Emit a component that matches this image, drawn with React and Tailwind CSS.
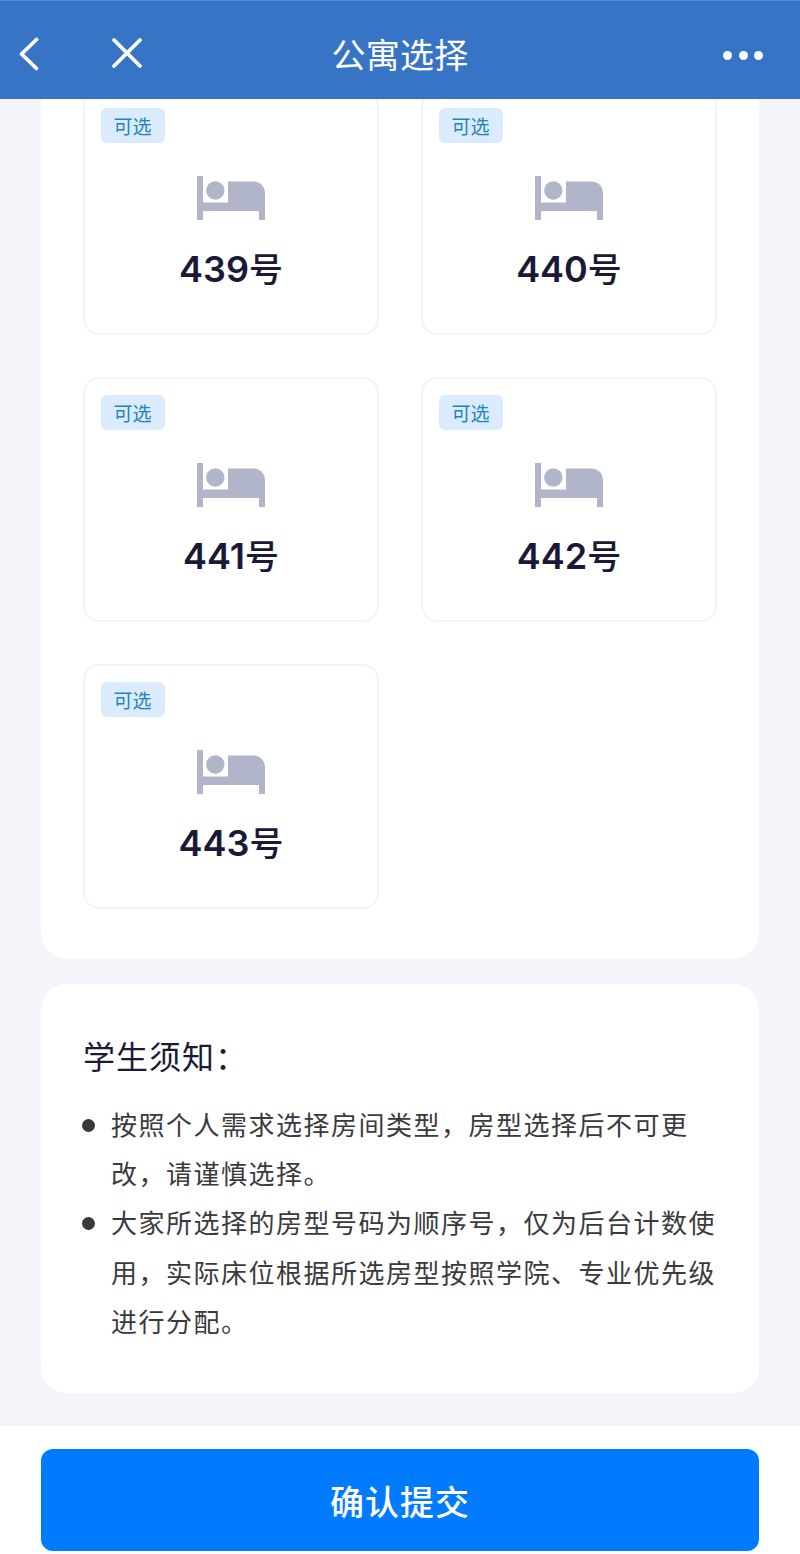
import React from 'react';

const rooms = ['439', '440', '441', '442', '443'];

const notices = [
  ['按照个人需求选择房间类型，房型选择后不可更', '改，请谨慎选择。'],
  ['大家所选择的房型号码为顺序号，仅为后台计数使', '用，实际床位根据所选房型按照学院、专业优先级', '进行分配。'],
];

const BedIcon = () => (
  <svg width="68" height="44" viewBox="0 0 68 44" fill="#b0b5c9">
    <path d="M0 0H6V26.5H31V5.5H56.5C63 5.5 68 10.5 68 17V44H62V35H6V44H0Z" />
    <circle cx="18.3" cy="14.5" r="9.2" />
  </svg>
);

const Header = () => (
  <header className="grid h-[99px] grid-cols-[1fr_auto_1fr] items-center border-t border-[#5288d8] bg-[#3874c5] pb-px text-white">
    <div className="flex items-center">
      <button aria-label="返回" className="ml-[18px] mt-[9px]">
        <svg width="22" height="36" viewBox="0 0 22 36" fill="none" stroke="currentColor" strokeWidth="3.8" strokeLinecap="round" strokeLinejoin="round">
          <path d="M18.5 3.5L3.5 18L18.5 32.5" />
        </svg>
      </button>
      <button aria-label="关闭" className="ml-[71px] mt-[7px]">
        <svg width="32" height="32" viewBox="0 0 32 32" fill="none" stroke="currentColor" strokeWidth="3.8" strokeLinecap="round">
          <path d="M3 3L29 29M29 3L3 29" />
        </svg>
      </button>
    </div>
    <h1 className="mt-[13px] text-[34px] leading-none tracking-[0.3px]">公寓选择</h1>
    <button aria-label="更多" className="mr-[37px] mt-[11px] flex gap-[6.5px] justify-self-end">
      <span className="size-[9px] rounded-full bg-white" />
      <span className="size-[9px] rounded-full bg-white" />
      <span className="size-[9px] rounded-full bg-white" />
    </button>
  </header>
);

const RoomCard = ({ number }) => (
  <div className="relative flex h-[245px] flex-col items-center rounded-[16px] border-2 border-[#f4f4f6] pt-[84px]">
    <span className="absolute left-4 top-4 flex h-[35px] w-16 items-center justify-center rounded-[6px] bg-[#d9ebfc] pr-px pt-1 text-[19px] leading-none text-[#2484b8]">
      可选
    </span>
    <BedIcon />
    <p className="mt-[29px] flex items-baseline text-[36px] font-semibold leading-[40px] text-[#1a1a36]">
      {number}
      <span className="text-[34px] font-medium">号</span>
    </p>
  </div>
);

export default function App() {
  return (
    <div
      lang="zh-CN"
      className="flex h-[1554px] w-[800px] flex-col overflow-hidden bg-[#f4f5fa] font-['Inter','Noto_Sans_CJK_SC',sans-serif]"
    >
      <Header />

      <main className="flex h-[1327px] flex-col gap-[25px] overflow-hidden px-[41px]">
        {/* Room list, scrolled under the header */}
        <section className="-mt-[9px] h-[869px] shrink-0 rounded-b-[26px] bg-white px-[42px]">
          <div className="grid grid-cols-2 gap-[42px]">
            {rooms.map((number) => (
              <RoomCard key={number} number={number} />
            ))}
          </div>
        </section>

        <section className="h-[409px] shrink-0 rounded-[26px] bg-white px-[42px] pt-[54px]">
          <h2 className="text-[32px] leading-[40px] tracking-[1px] text-[#1a1a36]">学生须知：</h2>
          <ul className="mt-[23px] text-[26px] leading-[49.2px] tracking-[1.5px] text-[#3a3a3c]">
            {notices.map((lines, index) => (
              <li key={index} className="flex">
                <span className="-ml-px mr-4 mt-[18px] size-[13px] shrink-0 rounded-full bg-[#3a3a3c]" />
                <p className="whitespace-nowrap">
                  {lines.map((line) => (
                    <span key={line} className="block">{line}</span>
                  ))}
                </p>
              </li>
            ))}
          </ul>
        </section>
      </main>

      <footer className="flex-1 bg-white px-[41px] pt-[23px]">
        <button className="flex h-[102px] w-full items-center justify-center rounded-[12px] bg-[#007aff] pt-[5px] text-[34px] font-medium leading-none tracking-[1px] text-white">
          确认提交
        </button>
      </footer>
    </div>
  );
}
